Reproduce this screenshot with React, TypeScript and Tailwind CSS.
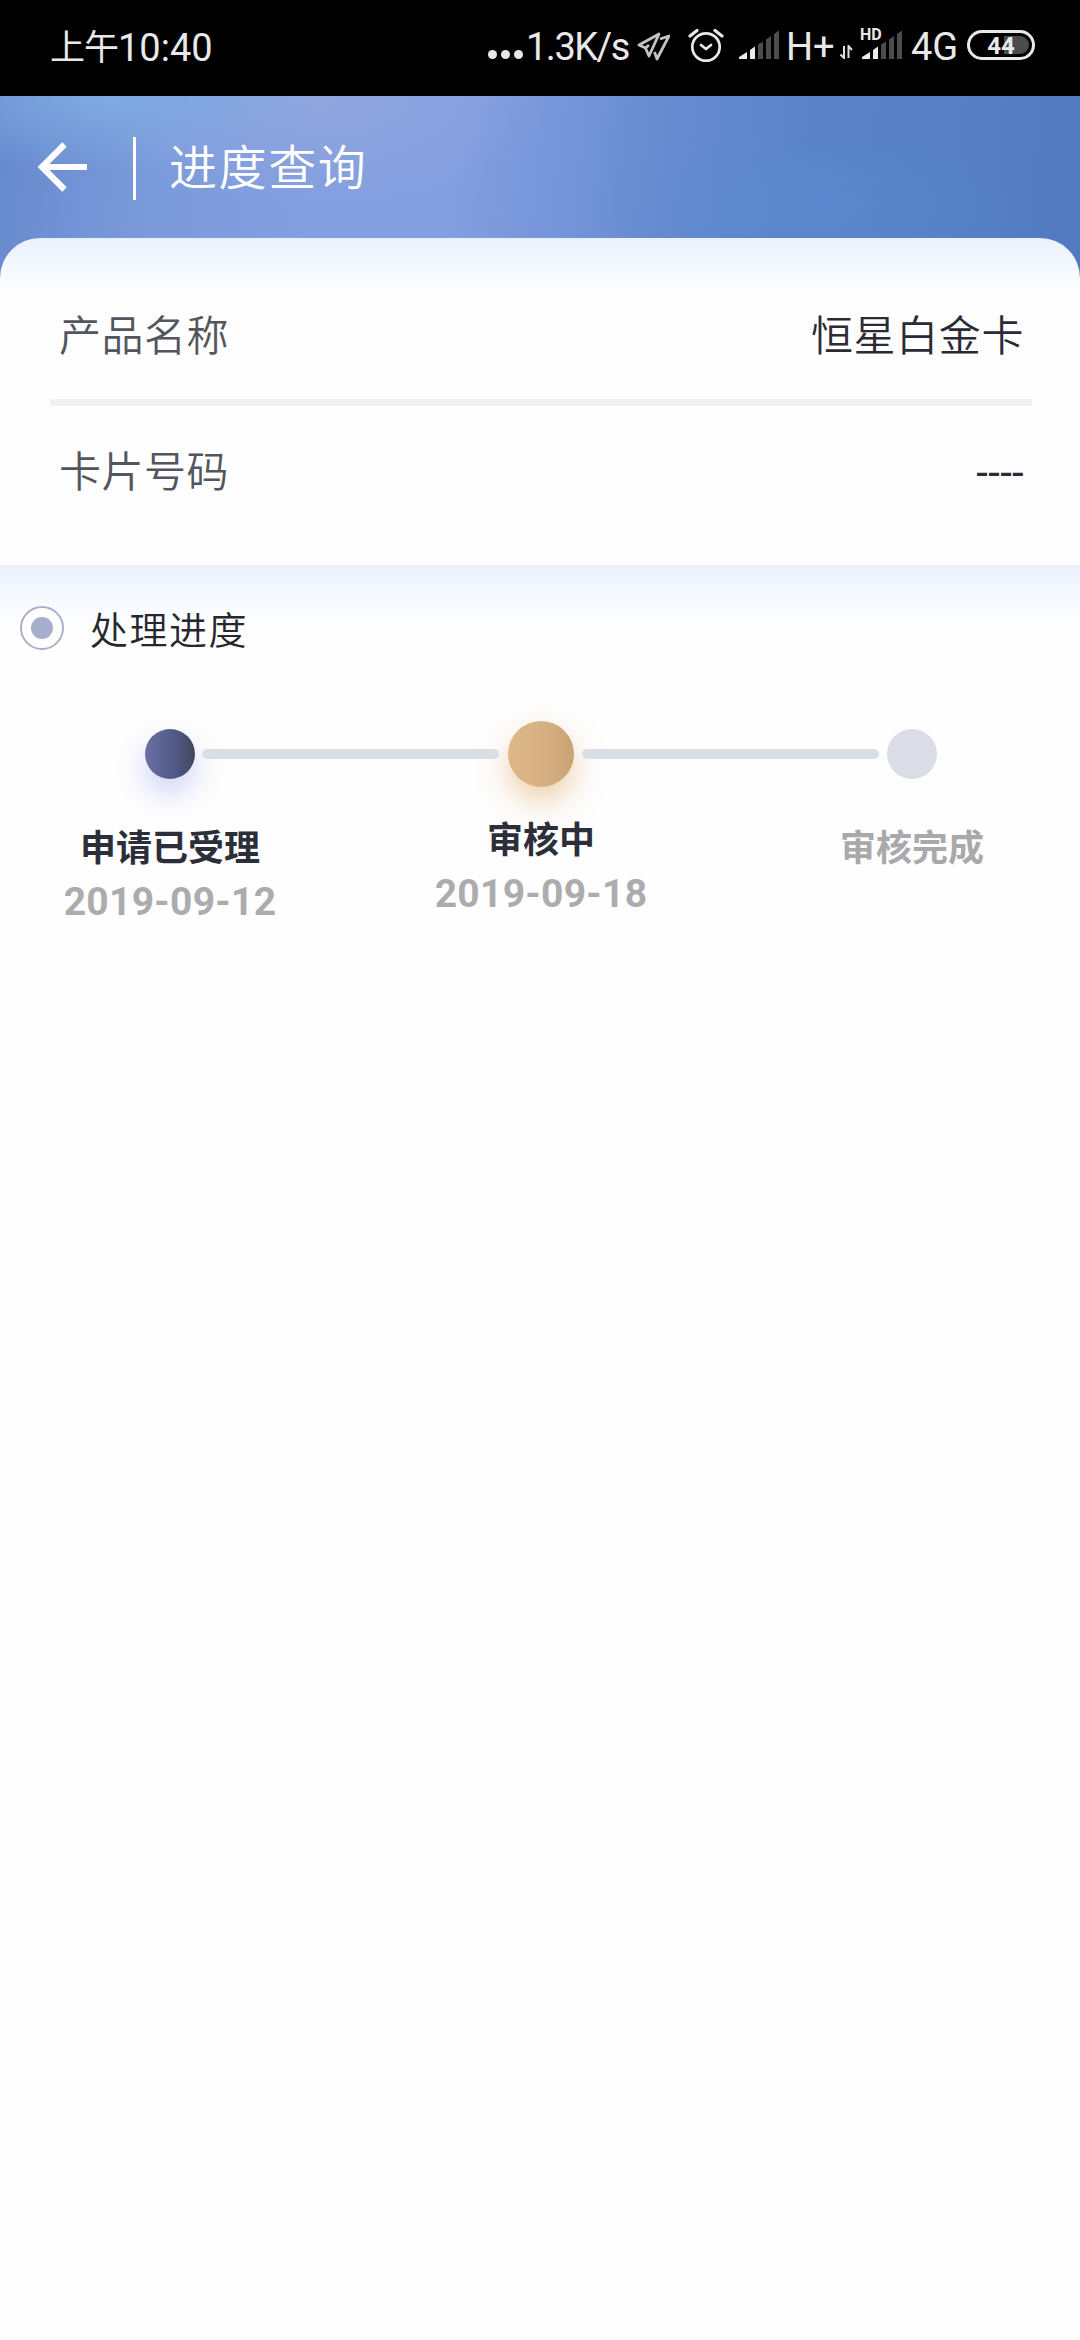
import React from "react";

const SignalBars = () => (
  <svg width="41" height="30" viewBox="0 0 41 30" className="block">
    <path d="M0 29V27L8 22V29Z M11 29V20L16 16.500V29Z" fill="#ececec" />
    <path d="M19 29V14.500L24 11.500V29Z M27 29V9.500L32 6V29Z M35 29V4L40 0.500V29Z" fill="#4c4c4c" />
  </svg>
);

const StatusBar = () => (
  <div className="flex h-24 items-start bg-black pl-[50px] font-['Roboto','Noto_Sans_CJK_SC',sans-serif] text-[#e9e9e9]">
    <div className="mt-[23px] flex h-[50px] w-[200px] items-center whitespace-nowrap leading-[50px]">
      <span className="mt-[1px] text-[35px] tracking-[-1px]">上午</span>
      <span className="text-[38px]">10:40</span>
    </div>
    <div className="ml-[238px] mt-[50px] flex gap-[4px]">
      <i className="size-[9px] rounded-full bg-[#e9e9e9]" />
      <i className="size-[9px] rounded-full bg-[#e9e9e9]" />
      <i className="size-[9px] rounded-full bg-[#e9e9e9]" />
    </div>
    <span className="ml-[3px] mt-[22px] w-[109px] whitespace-nowrap text-[38px] leading-[50px] tracking-[-1.500px]">1.3K/s</span>
    <svg className="mt-[31px] block" width="35" height="31" viewBox="0 0 35 31" fill="none" stroke="#c4c4c4" strokeWidth="2.800" strokeLinejoin="round">
      <path d="M24 3L4 14L10.500 17L14 25L24 3Z M10.500 17L14 14" />
      <path d="M25 8L34 5L22 28L19.500 21" />
    </svg>
    <svg className="ml-[18px] mt-[28px] block" width="36" height="36" viewBox="0 0 36 36" fill="none" stroke="#e9e9e9" strokeWidth="2.700" strokeLinecap="round" strokeLinejoin="round">
      <circle cx="18" cy="19" r="13.700" />
      <path d="M13 17L18 21L23 17" />
      <path d="M2 8L9 2.500M27 2.500L34 8" strokeWidth="3.200" />
    </svg>
    <div className="ml-[15px] mt-[30px]">
      <SignalBars />
    </div>
    <span className="ml-[6px] mt-[22px] w-[52px] whitespace-nowrap text-[38px] leading-[50px]">H+</span>
    <svg className="ml-[2px] mt-[45px] block" width="13" height="14" viewBox="0 0 13 14" fill="none" stroke="#dedede" strokeWidth="2">
      <path d="M4 1V13L0.500 9.500M8.500 13V1L12 5" />
    </svg>
    <div className="relative ml-[9px] mt-[27px] h-[33px] w-[41px]">
      <div className="pt-[3px]">
        <SignalBars />
      </div>
      <span className="absolute -left-[2px] top-0 bg-black pr-[1px] text-[16px] font-bold leading-[15px]">HD</span>
    </div>
    <span className="ml-[8px] mt-[22px] w-[56px] whitespace-nowrap text-[38px] leading-[50px]">4G</span>
    <div className="relative mt-[30px] flex h-[30px] w-[68px] items-center justify-center rounded-full border-[3px] border-[#e9e9e9]">
      <i className="absolute right-[3px] top-[3px] h-[18px] w-[25px] rounded-r-full bg-[#4c4c4c]" />
      <span className="relative mt-[2px] text-[24px] font-bold leading-[24px]">44</span>
    </div>
  </div>
);

const Header = () => (
  <header className="flex h-[182px] items-start bg-[radial-gradient(ellipse_220px_75px_at_110px_0px,#7eaae2_0%,#7eaae200_100%),radial-gradient(ellipse_240px_110px_at_310px_0px,#90a5de_0%,#90a5de00_100%),radial-gradient(ellipse_220px_80px_at_820px_110px,#598cd280_0%,#598cd200_100%),linear-gradient(97deg,#678acd_0%,#7c9bdc_16%,#839fe0_30%,#839fe0_42%,#7495d8_52%,#678bd0_61%,#5b84c9_72%,#5780c5_86%,#5179bf_100%)]">
    <svg className="ml-[37px] mt-[46px] block" width="51" height="50" viewBox="0 0 51 50" fill="none" stroke="#ffffff" strokeWidth="6.200">
      <path d="M27.500 2.500L5 25L27.500 47.500M5 25H50" />
    </svg>
    <div className="ml-[45px] mt-[41px] h-[63px] w-[3px] bg-white" />
    <h1 className="ml-[33px] mt-[32px] text-[48px] font-[350] leading-[72px] tracking-[1.600px] text-white">进度查询</h1>
  </header>
);

const InfoRow = ({ label, value, tone }: { label: string; value: string; tone: string }) => (
  <div className="flex h-[60px] items-center justify-between pl-[59px] pr-[56px] font-['Roboto','Noto_Sans_CJK_SC',sans-serif] text-[42px] leading-[60px]">
    <span className="font-[350] tracking-[0.500px] text-[#53565d]">{label}</span>
    <span className={tone}>{value}</span>
  </div>
);

type StepProps = { title: string; date?: string; dot: string; tone: string };

const Step = ({ title, date, dot, tone }: StepProps) => (
  <div className="flex w-[240px] flex-col items-center whitespace-nowrap">
    <div className={dot} />
    <div className={`text-[36px] font-bold leading-[54px] ${tone}`}>{title}</div>
    {date && (
      <div className="mt-[2px] font-['Roboto',sans-serif] text-[39px] font-bold leading-[56px] tracking-[0.300px] text-[#acacae]">{date}</div>
    )}
  </div>
);

export default function App() {
  return (
    <div className="h-[2340px] w-[1080px] overflow-hidden bg-[#fefefe] font-['Noto_Sans_CJK_SC',sans-serif]">
      <StatusBar />
      <Header />
      <section className="relative -mt-10 h-[327px] rounded-t-[40px] bg-[linear-gradient(#eaf1fe_0px,#f3f8ff_26px,#fefefe_60px)] pt-[69px]">
        <InfoRow label="产品名称" value="恒星白金卡" tone="font-[350] tracking-[0.600px] text-[#2b2b35]" />
        <div className="ml-[50px] mt-[32px] h-[7px] w-[982px] bg-[#f1f1f1]" />
        <div className="mt-[37px]">
          <InfoRow label="卡片号码" value="----" tone="tracking-[0.300px] text-[#2b2b35]" />
        </div>
      </section>
      <section className="bg-[linear-gradient(#ecf0fe_0px,#f6faff_35px,#fefefe_62px)] pt-10">
        <div className="flex h-[46px] items-center pl-5">
          <div className="flex size-11 items-center justify-center rounded-full border-2 border-[#adaecb] bg-[#fefefe]">
            <i className="size-[22px] rounded-full bg-[#a6aecb]" />
          </div>
          <h2 className="ml-[26px] text-[38px] font-[350] leading-[58px] tracking-[1.500px] text-[#25272e]">处理进度</h2>
        </div>
        <div className="relative mt-[70px] flex justify-between pl-[50px] pr-12">
          <div className="pt-2">
            <Step
              title="申请已受理"
              date="2019-09-12"
              tone="mt-[39px] text-[#2c2e3a]"
              dot="size-[50px] rounded-full bg-[linear-gradient(90deg,#6b6fa5,#525c8a_55%,#41465f)] shadow-[0_14px_30px_rgba(95,105,225,0.3)]"
            />
          </div>
          <Step
            title="审核中"
            date="2019-09-18"
            tone="mt-[23px] text-[#2c2e3a]"
            dot="size-[66px] rounded-full bg-[linear-gradient(90deg,#deb888,#d6b083_55%,#c8a273)] shadow-[0_14px_30px_rgba(220,165,95,0.5)]"
          />
          <div className="pt-2">
            <Step title="审核完成" tone="mt-[39px] text-[#a9a9ac]" dot="size-[50px] rounded-full bg-[#dadde6]" />
          </div>
          <div className="absolute left-[202px] top-[28px] h-[10px] w-[297px] rounded-full bg-[#d9dde4]" />
          <div className="absolute left-[582px] top-[28px] h-[10px] w-[297px] rounded-full bg-[#d9dde4]" />
        </div>
      </section>
    </div>
  );
}
